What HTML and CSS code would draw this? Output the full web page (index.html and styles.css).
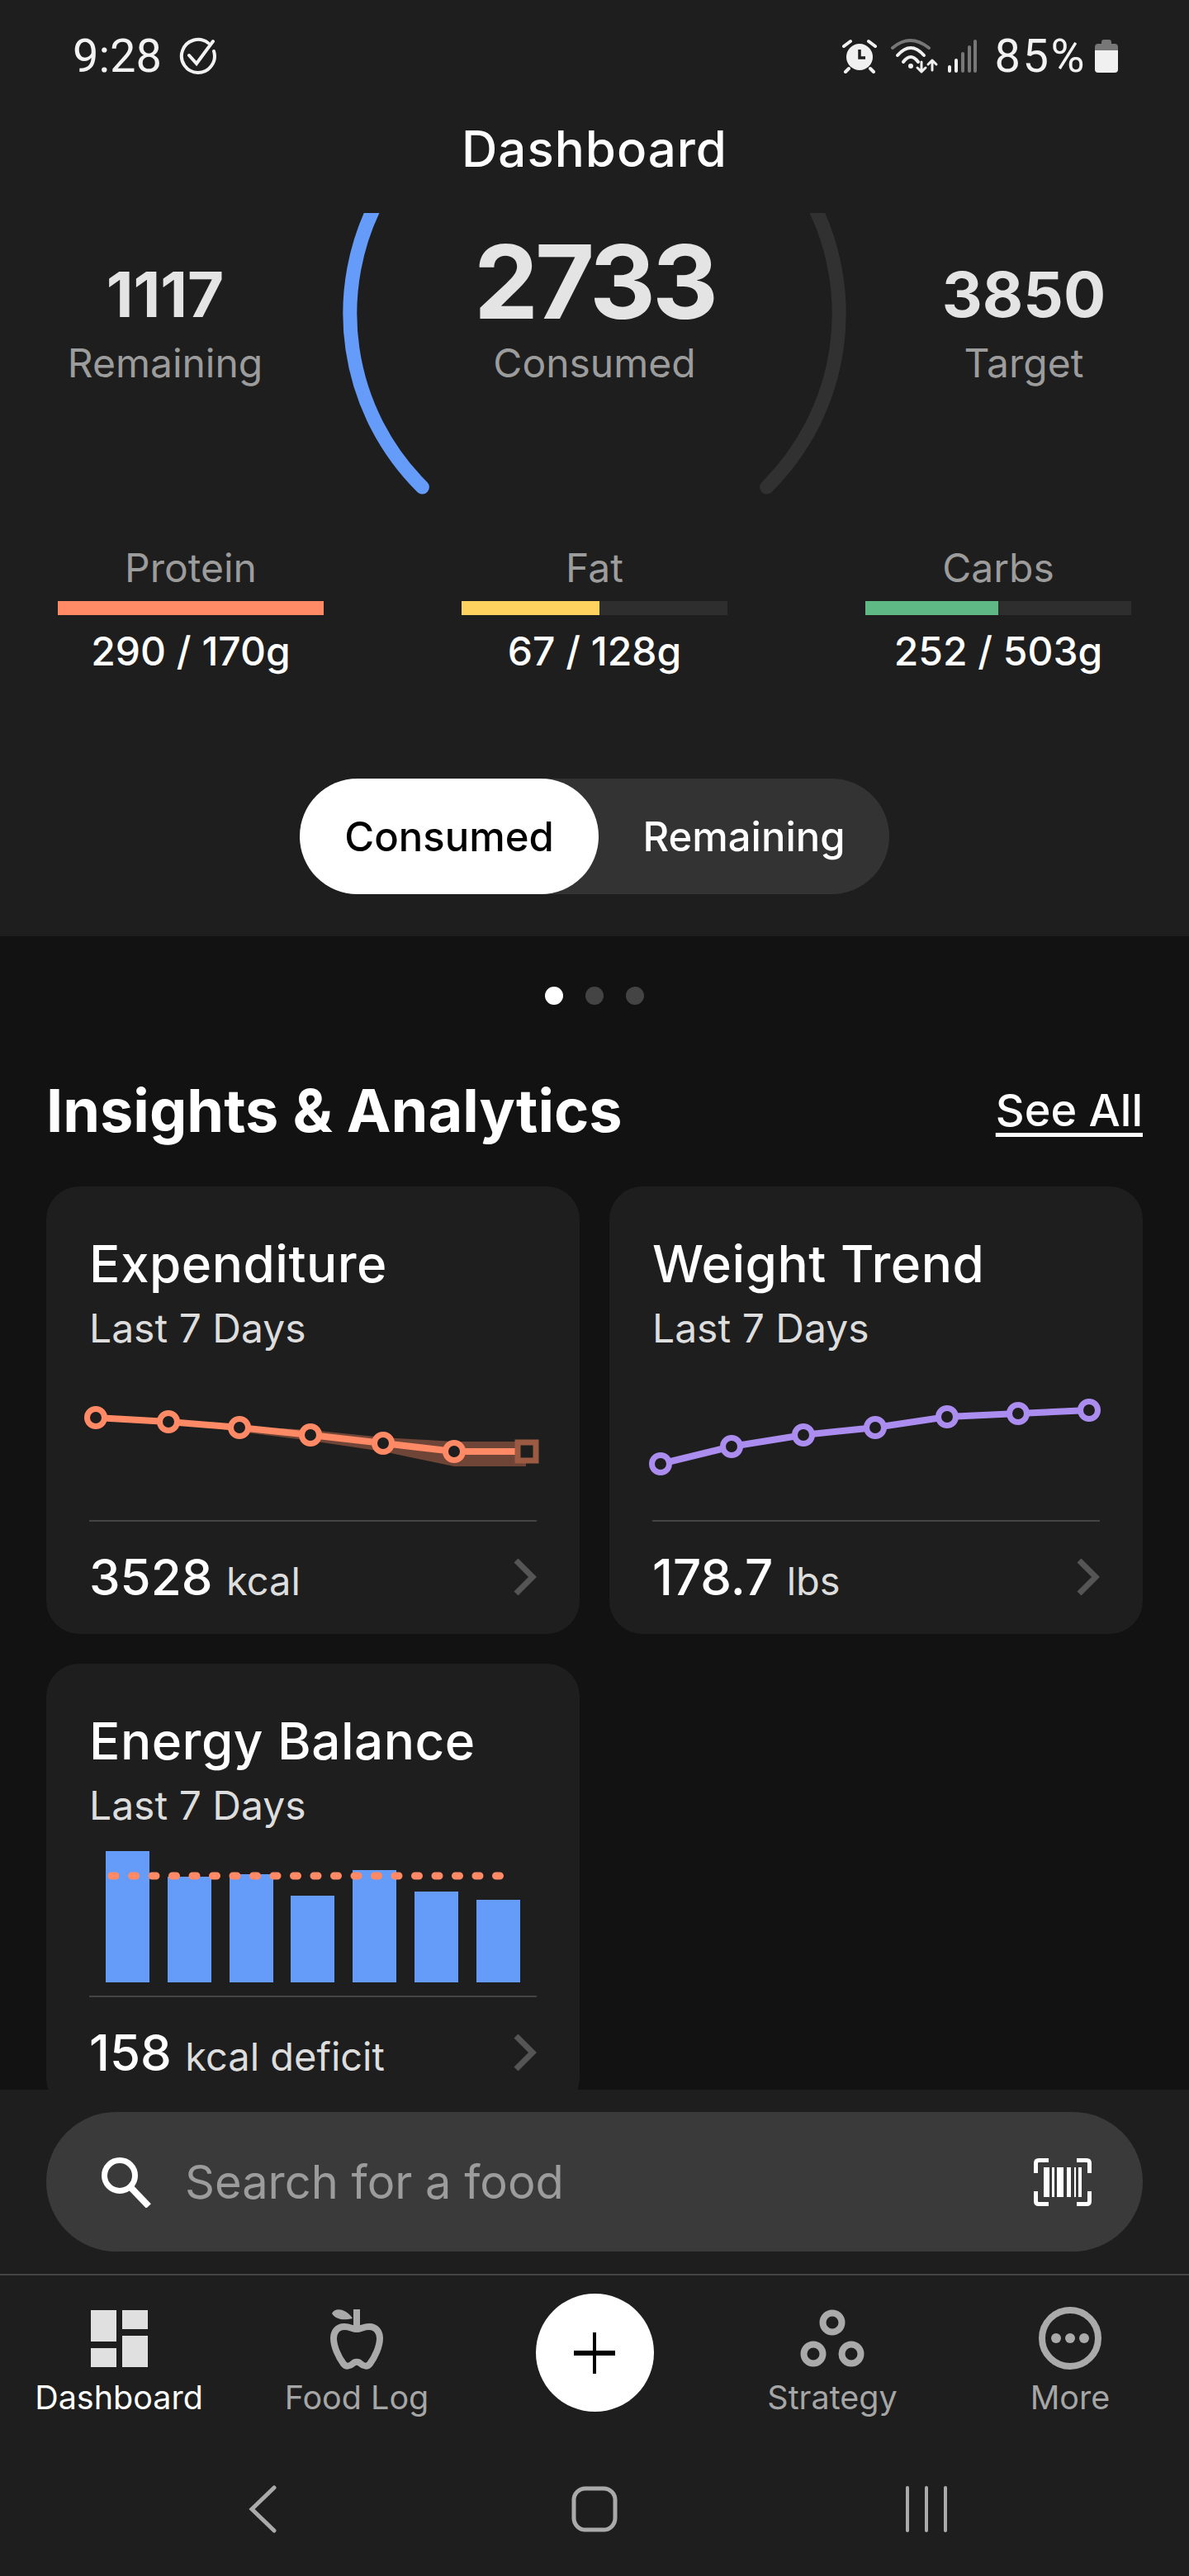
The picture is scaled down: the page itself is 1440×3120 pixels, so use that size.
FILE: index.html
```html
<!DOCTYPE html>
<html lang="en">

<head>
    <meta charset="UTF-8">
    <meta name="viewport" content="width=device-width, initial-scale=1.0">
    <title>Dashboard</title>
    <link rel="stylesheet" href="styles.css">
</head>

<body>
    <div class="phone">

        <!-- Top summary -->
        <header class="summary">
            <div class="status-bar">
                <div class="status-left">
                    <span class="status-time">9:28</span>
                    <svg class="icon-check" viewBox="0 0 48 48" fill="none" stroke="#f2f2f2" stroke-width="4" stroke-linecap="round">
                        <path d="M36 8 A20 20 0 1 0 43 18" />
                        <path d="M13 23 L22 33 L42 6" />
                    </svg>
                </div>
                <div class="status-right">
                    <svg class="icon-alarm" viewBox="0 0 44 42">
                        <circle cx="22" cy="22" r="16" fill="#f0f0f0" />
                        <path d="M22 13 V23 H29" fill="none" stroke="#1e1e1e" stroke-width="3.5" />
                        <path d="M3 9 L11 3 M41 9 L33 3 M9 36 L5 40 M35 36 L39 40" fill="none" stroke="#f0f0f0" stroke-width="4" stroke-linecap="round" />
                    </svg>
                    <svg class="icon-wifi" viewBox="0 0 58 44" fill="none" stroke-width="4" stroke-linecap="round" stroke-linejoin="round">
                        <path d="M2 12 Q23 -6 46 12" stroke="#777" />
                        <path d="M8 21 Q24 3 40 21" stroke="#f0f0f0" />
                        <path d="M15 29 Q24 17 33 29" stroke="#f0f0f0" />
                        <circle cx="24" cy="34" r="3" fill="#f0f0f0" stroke="none" />
                        <path d="M37 29 V41 M32 36 L37 41 L42 36" stroke="#f0f0f0" stroke-width="3" />
                        <path d="M50 39 V27 M45 32 L50 27 L55 32" stroke="#f0f0f0" stroke-width="3" />
                    </svg>
                    <svg class="icon-signal" viewBox="0 0 38 40" stroke-width="4" stroke-linecap="round">
                        <path d="M3 33 V38 M11 25 V38" stroke="#f0f0f0" />
                        <path d="M19 17 V38 M27 9 V38 M34 2 V38" stroke="#777" />
                    </svg>
                    <span class="status-battery">85%</span>
                    <svg class="icon-battery" viewBox="0 0 28 40">
                        <path d="M8 3 Q8 0 11 0 H17 Q20 0 20 3 V5 H24 Q28 5 28 9 V13 H0 V9 Q0 5 4 5 H8 Z" fill="#777" />
                        <path d="M0 13 H28 V36 Q28 40 24 40 H4 Q0 40 0 36 Z" fill="#f0f0f0" />
                    </svg>
                </div>
            </div>

            <h1 class="page-title">Dashboard</h1>

            <div class="stats">
                <div class="stat">
                    <div class="stat-number">1117</div>
                    <div class="stat-label">Remaining</div>
                </div>
                <div class="stat stat-main">
                    <svg class="gauge" viewBox="0 0 640 360" fill="none" stroke-width="17" stroke-linecap="round">
                        <path d="M580 -20 A296 296 0 0 1 528.6 332" stroke="#313131" />
                        <path d="M60 -20 A296 296 0 0 0 111.4 332" stroke="#659bf9" />
                    </svg>
                    <div class="stat-number">2733</div>
                    <div class="stat-label">Consumed</div>
                </div>
                <div class="stat">
                    <div class="stat-number">3850</div>
                    <div class="stat-label">Target</div>
                </div>
            </div>

            <div class="macros">
                <div class="macro">
                    <div class="macro-name">Protein</div>
                    <div class="macro-track"><div class="macro-fill protein" style="width: 100%"></div></div>
                    <div class="macro-value">290 / 170g</div>
                </div>
                <div class="macro">
                    <div class="macro-name">Fat</div>
                    <div class="macro-track"><div class="macro-fill fat" style="width: 52%"></div></div>
                    <div class="macro-value">67 / 128g</div>
                </div>
                <div class="macro">
                    <div class="macro-name">Carbs</div>
                    <div class="macro-track"><div class="macro-fill carbs" style="width: 50%"></div></div>
                    <div class="macro-value">252 / 503g</div>
                </div>
            </div>

            <div class="toggle-row">
                <div class="toggle">
                    <div class="toggle-option active">Consumed</div>
                    <div class="toggle-option">Remaining</div>
                </div>
            </div>
        </header>

        <!-- Pager -->
        <div class="pager">
            <span class="dot active"></span>
            <span class="dot"></span>
            <span class="dot"></span>
        </div>

        <!-- Insights -->
        <section class="insights">
            <div class="insights-head">
                <h2>Insights &amp; Analytics</h2>
                <a class="see-all">See All</a>
            </div>

            <div class="cards">
                <div class="card">
                    <h3 class="card-title">Expenditure</h3>
                    <div class="card-sub">Last 7 Days</div>
                    <svg class="line-chart" viewBox="0 0 540 120" fill="none">
                        <polygon points="96,31 268,41 356,50 442,55 529,55 529,85 442,85 356,67 268,54 182,43" fill="#ff8a65" fill-opacity="0.36" />
                        <polyline points="8,26 96,31 182,38 268,47 356,57 442,67 529,67" stroke="#ff8a65" stroke-width="8" />
                        <g fill="#1e1e1e" stroke="#ff8a65" stroke-width="7">
                            <circle cx="8" cy="26" r="10.5" />
                            <circle cx="96" cy="31" r="10.5" />
                            <circle cx="182" cy="38" r="10.5" />
                            <circle cx="268" cy="47" r="10.5" />
                            <circle cx="356" cy="57" r="10.5" />
                            <circle cx="442" cy="67" r="10.5" />
                        </g>
                        <rect x="519" y="56" width="22" height="22" fill="#1e1e1e" stroke="#9c5a42" stroke-width="7" />
                    </svg>
                    <div class="card-foot">
                        <div><span class="foot-value">3528</span> <span class="foot-unit">kcal</span></div>
                        <svg class="chevron" viewBox="0 0 28 44" fill="none" stroke="#555" stroke-width="7"><path d="M3 2 L23 22 L3 42" /></svg>
                    </div>
                </div>

                <div class="card">
                    <h3 class="card-title">Weight Trend</h3>
                    <div class="card-sub">Last 7 Days</div>
                    <svg class="line-chart" viewBox="0 0 540 120" fill="none">
                        <polyline points="10,82 96,61 183,47 270,38 357,25 443,21 529,17" stroke="#ab8df0" stroke-width="8" />
                        <g fill="#1e1e1e" stroke="#ab8df0" stroke-width="7">
                            <circle cx="10" cy="82" r="10.5" />
                            <circle cx="96" cy="61" r="10.5" />
                            <circle cx="183" cy="47" r="10.5" />
                            <circle cx="270" cy="38" r="10.5" />
                            <circle cx="357" cy="25" r="10.5" />
                            <circle cx="443" cy="21" r="10.5" />
                            <circle cx="529" cy="17" r="10.5" />
                        </g>
                    </svg>
                    <div class="card-foot">
                        <div><span class="foot-value">178.7</span> <span class="foot-unit">lbs</span></div>
                        <svg class="chevron" viewBox="0 0 28 44" fill="none" stroke="#555" stroke-width="7"><path d="M3 2 L23 22 L3 42" /></svg>
                    </div>
                </div>

                <div class="card card-balance">
                    <h3 class="card-title">Energy Balance</h3>
                    <div class="card-sub">Last 7 Days</div>
                    <div class="bars">
                        <div class="bar" style="height: 159px"></div>
                        <div class="bar" style="height: 128px"></div>
                        <div class="bar" style="height: 131px"></div>
                        <div class="bar" style="height: 105px"></div>
                        <div class="bar" style="height: 136px"></div>
                        <div class="bar" style="height: 110px"></div>
                        <div class="bar" style="height: 100px"></div>
                        <svg class="target-line" viewBox="0 0 480 10" fill="none">
                            <path d="M5 5 H476" stroke="#ff8a65" stroke-width="9" stroke-linecap="round" stroke-dasharray="5 19.5" />
                        </svg>
                    </div>
                    <div class="card-foot">
                        <div><span class="foot-value">158</span> <span class="foot-unit">kcal deficit</span></div>
                        <svg class="chevron" viewBox="0 0 28 44" fill="none" stroke="#555" stroke-width="7"><path d="M3 2 L23 22 L3 42" /></svg>
                    </div>
                </div>
            </div>
        </section>

        <!-- Bottom dock, sits over the scrolling cards -->
        <footer class="dock">
            <div class="search-wrap">
                <div class="search">
                    <svg class="icon-search" viewBox="0 0 62 62" fill="none" stroke="#fff" stroke-width="7">
                        <circle cx="23" cy="23" r="18.5" />
                        <path d="M36 37 L58 60" stroke-width="8" />
                    </svg>
                    <span class="search-text">Search for a food</span>
                    <svg class="icon-barcode" viewBox="0 0 70 58">
                        <path d="M18 2.5 H6 Q2.5 2.5 2.5 6 V18 M52 2.5 H64 Q67.5 2.5 67.5 6 V18 M18 55.5 H6 Q2.5 55.5 2.5 52 V40 M52 55.5 H64 Q67.5 55.5 67.5 52 V40" fill="none" stroke="#fff" stroke-width="5" />
                        <g fill="#fff">
                            <rect x="12" y="11" width="7" height="36" />
                            <rect x="22" y="11" width="3" height="36" />
                            <rect x="28" y="11" width="8" height="36" />
                            <rect x="40" y="11" width="5" height="36" />
                            <rect x="49" y="11" width="2" height="36" />
                            <rect x="54" y="11" width="4" height="36" />
                        </g>
                    </svg>
                </div>
            </div>

            <nav class="tabs">
                <div class="tab active">
                    <svg class="tab-icon" viewBox="0 0 80 80" fill="#e0e0e0">
                        <rect x="6" y="6" width="31" height="38" />
                        <rect x="44" y="6" width="31" height="23" />
                        <rect x="44" y="37" width="31" height="38" />
                        <rect x="6" y="52" width="31" height="23" />
                    </svg>
                    <span>Dashboard</span>
                </div>
                <div class="tab">
                    <svg class="tab-icon" viewBox="-8 -3 80 80">
                        <path d="M32 26 C27 26 24 23 17 23 C8 23 4 30 4 37 C4 47 10 60 16 68 C19 72 24 71 27 68 C30 65 34 65 37 68 C40 71 45 72 48 68 C54 60 60 47 60 37 C60 30 56 23 47 23 C40 23 37 26 32 26 Z" fill="none" stroke="#aaa" stroke-width="8" />
                        <rect x="28" y="2" width="8" height="24" fill="#aaa" />
                        <path d="M2 7 C5 0 18 0 27 13 C16 16 6 14 2 7 Z" fill="#aaa" />
                    </svg>
                    <span>Food Log</span>
                </div>
                <div class="tab tab-add">
                    <div class="add-button">
                        <svg viewBox="0 0 50 50" class="icon-plus" fill="#000">
                            <rect x="23" y="0" width="4" height="50" />
                            <rect x="0" y="22" width="50" height="6" />
                        </svg>
                    </div>
                </div>
                <div class="tab">
                    <svg class="tab-icon" viewBox="0 0 80 80" fill="none" stroke="#aaa" stroke-width="8">
                        <circle cx="40" cy="21" r="11.5" />
                        <circle cx="17" cy="59" r="11.5" />
                        <circle cx="63" cy="59" r="11.5" />
                    </svg>
                    <span>Strategy</span>
                </div>
                <div class="tab">
                    <svg class="tab-icon" viewBox="0 0 80 80">
                        <circle cx="40" cy="40" r="34" fill="none" stroke="#aaa" stroke-width="8" />
                        <circle cx="23" cy="40" r="6" fill="#aaa" />
                        <circle cx="40" cy="40" r="6" fill="#aaa" />
                        <circle cx="57" cy="40" r="6" fill="#aaa" />
                    </svg>
                    <span>More</span>
                </div>
            </nav>

            <div class="system-nav">
                <svg class="sys-back" viewBox="0 0 34 58" fill="none" stroke="#aaa" stroke-width="5" stroke-linecap="round"><path d="M31 3 L4 29 L31 55" /></svg>
                <svg class="sys-home" viewBox="0 0 56 56" fill="none" stroke="#aaa" stroke-width="5"><rect x="3" y="3" width="50" height="50" rx="14" /></svg>
                <svg class="sys-recent" viewBox="0 0 50 56" fill="none" stroke="#aaa" stroke-width="4" stroke-linecap="round"><path d="M2 2 V54 M25 2 V54 M48 2 V54" /></svg>
            </div>
        </footer>
    </div>
</body>

</html>
```

FILE: styles.css
```css
* {
    box-sizing: border-box;
}

body {
    margin: 0;
    background-color: #121212;
    color: #fff;
    font-family: Inter, "Noto Sans", sans-serif;
}

.phone {
    position: relative;
    width: 1440px;
    height: 3120px;
    overflow: hidden;
}

/* Top summary */
.summary {
    height: 1134px;
    background-color: #1e1e1e;
}

.status-bar {
    display: flex;
    justify-content: space-between;
    align-items: center;
    height: 136px;
    padding: 0 86px 0 88px;
}

.status-left,
.status-right {
    display: flex;
    align-items: center;
}

.status-time,
.status-battery {
    font-family: Roboto, sans-serif;
    font-size: 56px;
    color: #f2f2f2;
}

.status-battery {
    margin-left: 20px;
    letter-spacing: 2.5px;
}

.icon-check {
    width: 48px;
    height: 48px;
    margin-left: 20px;
}

.icon-alarm {
    width: 44px;
    height: 42px;
}

.icon-wifi {
    width: 58px;
    height: 44px;
    margin-left: 16px;
}

.icon-signal {
    width: 38px;
    height: 40px;
    margin-left: 10px;
}

.icon-battery {
    width: 28px;
    height: 40px;
    margin-left: 10px;
}

.page-title {
    margin: 0;
    height: 88px;
    line-height: 88px;
    font-size: 60px;
    font-weight: 500;
    letter-spacing: 1px;
    text-align: center;
}

.stats {
    display: grid;
    grid-template-columns: 400px 640px 400px;
    height: 434px;
    padding-top: 34px;
}

.stat {
    position: relative;
    display: flex;
    flex-direction: column;
    justify-content: flex-end;
    align-items: center;
    height: 212px;
}

.stat-number {
    margin-bottom: 9px;
    font-size: 76px;
    line-height: 90px;
    font-weight: 700;
    color: #e4e4e4;
}

.stat-main .stat-number {
    margin-bottom: 4px;
    font-size: 124px;
    line-height: 130px;
    letter-spacing: -4px;
}

.stat-label {
    font-size: 48px;
    line-height: 60px;
    color: #9c9c9c;
}

/* Gauge arcs lie over the middle column */
.gauge {
    position: absolute;
    left: 0;
    top: 0;
    width: 640px;
    height: 360px;
}

.macros {
    display: flex;
    justify-content: space-between;
    padding: 0 70px;
}

.macro {
    width: 322px;
    text-align: center;
}

.macro-name {
    font-size: 48px;
    line-height: 60px;
    color: #9c9c9c;
}

.macro-track {
    height: 17px;
    margin-top: 10px;
    background-color: #2e2e2e;
}

.macro-fill {
    height: 100%;
}

.protein {
    background-color: #ff8a65;
}

.fat {
    background-color: #ffd25f;
}

.carbs {
    background-color: #5fb985;
}

.macro-value {
    margin-top: 14px;
    font-size: 48px;
    line-height: 60px;
    font-weight: 500;
}

.toggle-row {
    display: flex;
    justify-content: center;
    padding-top: 124px;
}

.toggle {
    display: flex;
    width: 714px;
    height: 140px;
    border-radius: 70px;
    background-color: #333;
}

.toggle-option {
    display: flex;
    flex: 1;
    justify-content: center;
    align-items: center;
    font-size: 49px;
    font-weight: 500;
}

.toggle-option.active {
    flex: 0 0 362px;
    border-radius: 70px;
    background-color: #fff;
    color: #000;
}

/* Pager */
.pager {
    display: flex;
    justify-content: center;
    gap: 27px;
    padding-top: 61px;
}

.dot {
    width: 22px;
    height: 22px;
    border-radius: 50%;
    background-color: #444;
}

.dot.active {
    background-color: #fff;
}

/* Insights */
.insights {
    padding: 0 56px;
}

.insights-head {
    display: flex;
    justify-content: space-between;
    align-items: center;
    height: 90px;
    margin-top: 82px;
}

.insights-head h2 {
    margin: 0;
    font-size: 72px;
    font-weight: 700;
}

.see-all {
    font-size: 54px;
    font-weight: 500;
    text-decoration: underline;
    text-underline-offset: 8px;
}

.cards {
    display: grid;
    grid-template-columns: 1fr 1fr;
    gap: 36px;
    margin-top: 48px;
}

.card {
    height: 542px;
    padding: 54px 52px 0;
    border-radius: 40px;
    background-color: #1e1e1e;
}

.card-title {
    margin: 0;
    font-size: 62px;
    line-height: 80px;
    font-weight: 500;
    letter-spacing: 0.5px;
}

.card-sub {
    margin-top: 8px;
    font-size: 48px;
    line-height: 60px;
    color: #ddd;
}

.line-chart {
    display: block;
    width: 540px;
    height: 120px;
    margin-top: 52px;
    overflow: visible;
}

.card-foot {
    display: flex;
    justify-content: space-between;
    align-items: center;
    height: 136px;
    margin-top: 30px;
    border-top: 2px solid #444;
}

.foot-value {
    font-size: 60px;
    font-weight: 500;
}

.foot-unit {
    margin-left: 12px;
    font-size: 47px;
    color: #ddd;
}

.chevron {
    width: 28px;
    height: 44px;
}

.bars {
    position: relative;
    display: flex;
    justify-content: space-between;
    align-items: flex-end;
    height: 160px;
    margin-top: 24px;
    padding: 0 20px;
}

.bar {
    width: 53px;
    background-color: #659bf9;
}

/* Dotted target sits on top of the bars */
.target-line {
    position: absolute;
    left: 22px;
    top: 26px;
    width: 480px;
    height: 10px;
}

.card-balance .card-foot {
    margin-top: 16px;
}

/* Bottom dock, over the cards */
.dock {
    position: absolute;
    left: 0;
    right: 0;
    bottom: 0;
    height: 589px;
    background-color: #1e1e1e;
}

.search-wrap {
    height: 225px;
    padding: 27px 56px 0;
    border-bottom: 2px solid #444;
}

.search {
    display: flex;
    align-items: center;
    height: 169px;
    padding: 0 62px 0 66px;
    border-radius: 85px;
    background-color: #3a3a3a;
}

.icon-search {
    width: 62px;
    height: 62px;
}

.search-text {
    flex: 1;
    margin-left: 40px;
    font-size: 56px;
    color: #9c9c9c;
}

.icon-barcode {
    width: 70px;
    height: 58px;
}

.tabs {
    display: grid;
    grid-template-columns: repeat(5, 288px);
    padding-top: 36px;
}

.tab {
    display: flex;
    flex-direction: column;
    align-items: center;
    font-size: 39.5px;
    line-height: 48px;
    color: #a6a6a6;
}

.tab.active {
    color: #fff;
}

.tab-icon {
    width: 80px;
    height: 80px;
    margin-bottom: 8px;
}

.add-button {
    display: flex;
    justify-content: center;
    align-items: center;
    width: 143px;
    height: 143px;
    margin-top: -14px;
    border-radius: 50%;
    background-color: #fff;
}

.icon-plus {
    width: 50px;
    height: 50px;
}

.system-nav {
    display: grid;
    grid-template-columns: 1fr 1fr 1fr;
    align-items: center;
    justify-items: center;
    padding: 0 117px;
    margin-top: 82px;
}

.sys-back {
    width: 34px;
    height: 58px;
}

.sys-home {
    width: 56px;
    height: 56px;
}

.sys-recent {
    width: 50px;
    height: 56px;
}
```
